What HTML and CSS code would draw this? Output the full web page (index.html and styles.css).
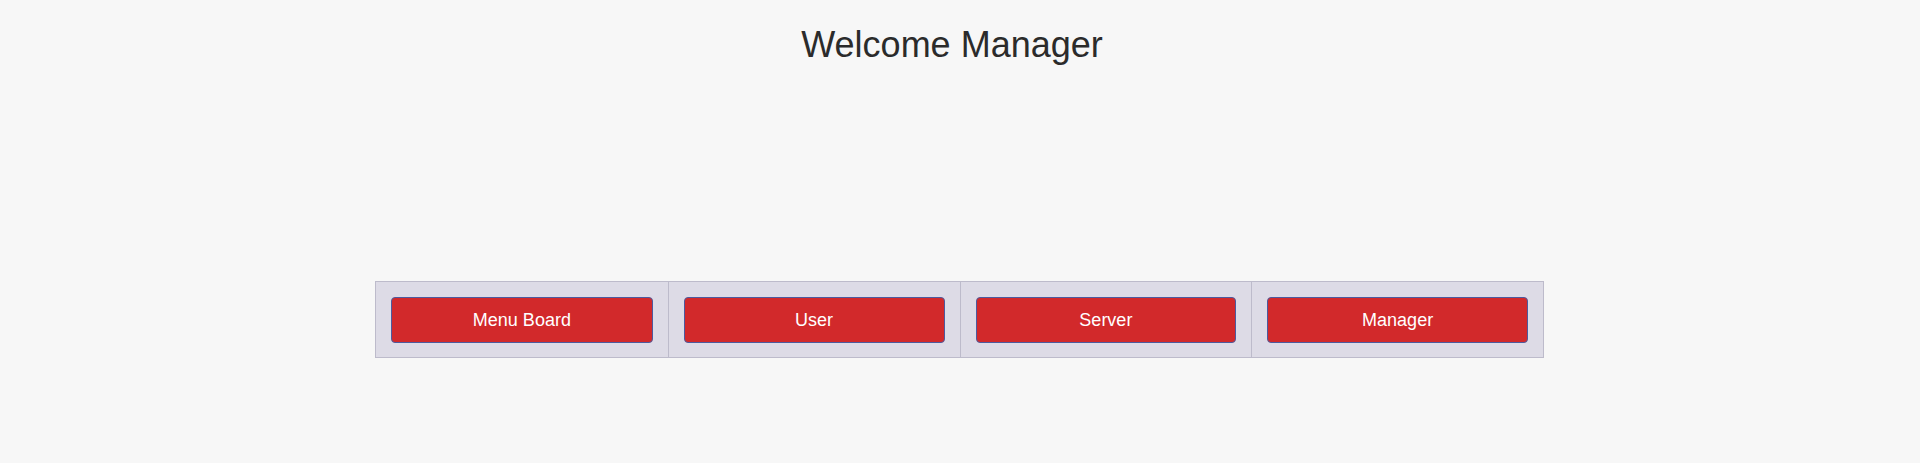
FILE: index.html
```html
<!DOCTYPE html>
<html>
<head>
<meta charset="utf-8">
<link rel="stylesheet" href="styles.css">
</head>
<body>
<h1 class="title">Welcome Manager</h1>
<div class="nav">
  <div class="cell"><button class="btn">Menu Board</button></div>
  <div class="cell"><button class="btn">User</button></div>
  <div class="cell"><button class="btn">Server</button></div>
  <div class="cell"><button class="btn">Manager</button></div>
</div>
</body>
</html>
```

FILE: styles.css
```css
html, body {
  margin: 0;
  padding: 0;
  background: #f7f7f7;
  font-family: "Liberation Sans", Arial, sans-serif;
}
.title {
  margin: 0;
  padding-top: 23px;
  padding-right: 16px;
  text-align: center;
  font-size: 36px;
  font-weight: normal;
  line-height: 44px;
  color: #2b2b2b;
}
.nav {
  margin: 214px 0 0 375px;
  width: 1169px;
  display: grid;
  grid-template-columns: repeat(4, 1fr);
  border: 1px solid #bdbbcb;
  background: #dddbe6;
  box-sizing: border-box;
}
.cell {
  padding: 15px 15px 14px;
  border-left: 1px solid #bdbbcb;
}
.cell:first-child {
  border-left: none;
}
.btn {
  display: block;
  width: 100%;
  height: 46px;
  background: #d2292b;
  color: #ffffff;
  border: 1px solid #4d5a9e;
  border-radius: 4px;
  font-family: "Liberation Sans", Arial, sans-serif;
  font-size: 18px;
  cursor: pointer;
}
```
